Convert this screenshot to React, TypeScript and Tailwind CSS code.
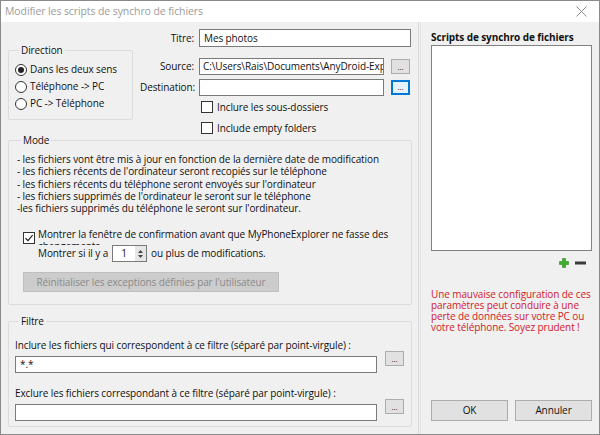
import { useState } from 'react';

const MODE_LINES = [
  "- les fichiers vont être mis à jour en fonction de la dernière date de modification",
  "- les fichiers récents de l'ordinateur seront recopiés sur le téléphone",
  "- les fichiers récents du téléphone seront envoyés  sur l'ordinateur",
  "- les fichiers supprimés de l'ordinateur le seront sur le téléphone",
  "-les fichiers supprimés du téléphone le seront sur l'ordinateur.",
];

function Radio({ checked, label }: { checked?: boolean; label: string }) {
  return (
    <div className="flex items-center h-[17px] gap-[3px]">
      <span className="w-[12px] h-[12px] rounded-full border border-[#333] bg-white flex items-center justify-center">
        {checked && <span className="w-[6px] h-[6px] rounded-full bg-[#222]" />}
      </span>
      <span>{label}</span>
    </div>
  );
}

function Check({ checked }: { checked?: boolean }) {
  return (
    <span className="w-[12px] h-[12px] border border-[#333] bg-white flex items-center justify-center shrink-0">
      {checked && (
        <svg width="10" height="10" viewBox="0 0 10 10">
          <path d="M1.5 5.2 L4 7.6 L8.6 2.2" fill="none" stroke="#222" strokeWidth="1.2" />
        </svg>
      )}
    </span>
  );
}

function DotsButton({ focused }: { focused?: boolean }) {
  return (
    <button
      className={
        focused
          ? 'w-[19px] h-[15px] bg-[#e5f1fb] border-2 border-[#0078d7] flex items-end justify-center pb-[2px] text-[8px] leading-none'
          : 'w-[19px] h-[15px] bg-[#e1e1e1] border border-[#adadad] flex items-end justify-center pb-[2px] text-[8px] leading-none'
      }
    >
      ...
    </button>
  );
}

export default function App() {
  const [title, setTitle] = useState('Mes photos');
  return (
    <div
      className="w-[600px] h-[435px] border border-[#8a8a8a] flex flex-col bg-[#f0f0f0] text-[10px] tracking-[-0.1px] text-[#111] overflow-hidden"
      style={{ fontFamily: '"Open Sans", "Noto Sans", sans-serif' }}
    >
      {/* title bar */}
      <div className="h-[21px] bg-white flex items-center justify-between pl-[4px] pr-[12px] shrink-0">
        <span className="text-[10.5px] text-[#9b9b9b]">Modifier les scripts de synchro de fichiers</span>
        <svg width="11" height="11" viewBox="0 0 11 11">
          <path d="M0.5 0.5 L10.5 10.5 M10.5 0.5 L0.5 10.5" stroke="#8c8c8c" strokeWidth="1" />
        </svg>
      </div>

      <div className="flex flex-1 min-h-0">
        {/* left column */}
        <div className="w-[417px] shrink-0 pl-[7px] pt-[7px] pr-[6px] flex flex-col">
          <div className="flex h-[105px]">
            <fieldset className="w-[125px] h-[76px] mt-[15px] border border-[#dcdcdc] rounded-[2px] pl-[6px] pt-[5px]">
              <legend className="px-[2px] ml-[4px] leading-[12px]">Direction</legend>
              <Radio checked label="Dans les deux sens" />
              <Radio label="Téléphone -> PC" />
              <Radio label="PC -> Téléphone" />
            </fieldset>

            <div className="flex flex-col ml-[7px]">
              <div className="flex items-center h-[18px]">
                <span className="w-[54px] text-right">Titre:</span>
                <input
                  value={title}
                  onChange={e => setTitle(e.target.value)}
                  className="ml-[5px] w-[212px] h-[18px] border border-[#7a7a7a] bg-white px-[4px] text-[10px] outline-none"
                />
              </div>
              <div className="flex items-center h-[17px] mt-[11px]">
                <span className="w-[54px] text-right">Source:</span>
                <div className="ml-[5px] w-[185px] h-[17px] border border-[#7a7a7a] bg-white px-[3px] flex items-center overflow-hidden whitespace-nowrap">
                  C:\Users\Rais\Documents\AnyDroid-Exp
                </div>
                <div className="ml-[7px]">
                  <DotsButton />
                </div>
              </div>
              <div className="flex items-center h-[17px] mt-[4px]">
                <span className="w-[54px] text-right">Destination:</span>
                <div className="ml-[5px] w-[185px] h-[17px] border border-[#7a7a7a] bg-white" />
                <div className="ml-[7px]">
                  <DotsButton focused />
                </div>
              </div>
              <div className="flex items-center gap-[4px] h-[14px] mt-[4px] ml-[61px]">
                <Check />
                <span>Inclure les sous-dossiers</span>
              </div>
              <div className="flex items-center gap-[4px] h-[14px] mt-[7px] ml-[61px]">
                <Check />
                <span>Include empty folders</span>
              </div>
            </div>
          </div>

          {/* Mode */}
          <fieldset className="w-[404px] h-[171px] border border-[#dcdcdc] rounded-[2px] pl-[8px] pt-[7px]">
            <legend className="px-[2px] ml-[4px] leading-[12px]">Mode</legend>
            <div className="leading-[12.3px] whitespace-nowrap">
              {MODE_LINES.map(l => (
                <div key={l}>{l}</div>
              ))}
            </div>
            <div className="flex items-start mt-[15px] ml-[6px]">
              <div className="mt-[3px]">
                <Check checked />
              </div>
              <div className="ml-[3px] h-[16px] overflow-hidden">
                <div className="leading-[12px] w-[365px] -mt-[1px]">
                  Montrer la fenêtre de confirmation avant que MyPhoneExplorer ne fasse des changements
                </div>
              </div>
            </div>
            <div className="flex items-center ml-[21px] h-[17px]">
              <span>Montrer si il y a</span>
              <div className="ml-[4px] w-[35px] h-[17px] border border-[#7a7a7a] bg-white flex">
                <span className="flex-1 flex items-center justify-center">1</span>
                <span className="w-[11px] bg-[#e6e6e6] flex flex-col items-center justify-center gap-[2px]">
                  <svg width="5" height="3" viewBox="0 0 5 3"><path d="M0 3 L2.5 0 L5 3Z" fill="#444" /></svg>
                  <svg width="5" height="3" viewBox="0 0 5 3"><path d="M0 0 L2.5 3 L5 0Z" fill="#444" /></svg>
                </span>
              </div>
              <span className="ml-[4px]">ou plus de modifications.</span>
            </div>
            <button
              disabled
              className="mt-[10px] ml-[6px] w-[256px] h-[20px] bg-[#cccccc] border border-[#bfbfbf] text-[#8a8a8a]"
            >
              Réinitialiser les exceptions définies par l'utilisateur
            </button>
          </fieldset>

          {/* Filtre */}
          <fieldset className="w-[404px] h-[112px] mt-[10px] border border-[#dcdcdc] rounded-[2px] pl-[6px] pt-[12px]">
            <legend className="px-[2px] ml-[4px] leading-[12px]">Filtre</legend>
            <div className="flex items-end">
              <div className="flex flex-col">
                <span className="leading-[12px]">
                  Inclure les fichiers qui correspondent à ce filtre (séparé par point-virgule) :
                </span>
                <div className="mt-[5px] w-[362px] h-[17px] border border-[#7a7a7a] bg-white px-[4px] flex items-center">
                  *.*
                </div>
              </div>
              <div className="ml-[8px] mb-[7px]">
                <DotsButton />
              </div>
            </div>
            <div className="flex items-end mt-[14px]">
              <div className="flex flex-col">
                <span className="leading-[12px]">
                  Exclure les fichiers correspondant à ce filtre (séparé par point-virgule) :
                </span>
                <div className="mt-[5px] w-[362px] h-[17px] border border-[#7a7a7a] bg-white" />
              </div>
              <div className="ml-[8px] mb-[7px]">
                <DotsButton />
              </div>
            </div>
          </fieldset>
        </div>

        {/* separator */}
        <div className="w-[3px] border-l border-[#dadada] border-r border-r-[#e4e4e4] shrink-0" />

        {/* right panel */}
        <div className="flex-1 pl-[10px] pr-[6px] pt-[9px] flex flex-col">
          <div className="font-bold leading-[12px]">Scripts de synchro de fichiers</div>
          <div className="mt-[2px] w-[161px] h-[206px] border border-[#828282] bg-white" />
          <div className="flex justify-end items-center gap-[6px] w-[161px] pr-[6px] mt-[6px] h-[12px]">
            <svg width="10" height="10" viewBox="0 0 10 10">
              <path d="M3.5 0.5 H6.5 V3.5 H9.5 V6.5 H6.5 V9.5 H3.5 V6.5 H0.5 V3.5 H3.5Z" fill="#3fae2a" stroke="#2a8a1c" strokeWidth="0.6" />
            </svg>
            <svg width="11" height="4" viewBox="0 0 11 4">
              <rect x="0" y="0.5" width="11" height="3" fill="#3a3a3a" />
            </svg>
          </div>
          <div className="mt-[20px] text-[#d0202a] leading-[11px] whitespace-nowrap">
            Une mauvaise configuration de ces
            <br />
            paramètres peut conduire à une
            <br />
            perte de données sur votre PC ou
            <br />
            votre téléphone. Soyez prudent !
          </div>
          <div className="flex gap-[7px] mt-auto mb-[13px]">
            <button className="w-[77px] h-[21px] bg-[#e1e1e1] border border-[#adadad]">OK</button>
            <button className="w-[77px] h-[21px] bg-[#e1e1e1] border border-[#adadad]">Annuler</button>
          </div>
        </div>
      </div>
    </div>
  );
}
